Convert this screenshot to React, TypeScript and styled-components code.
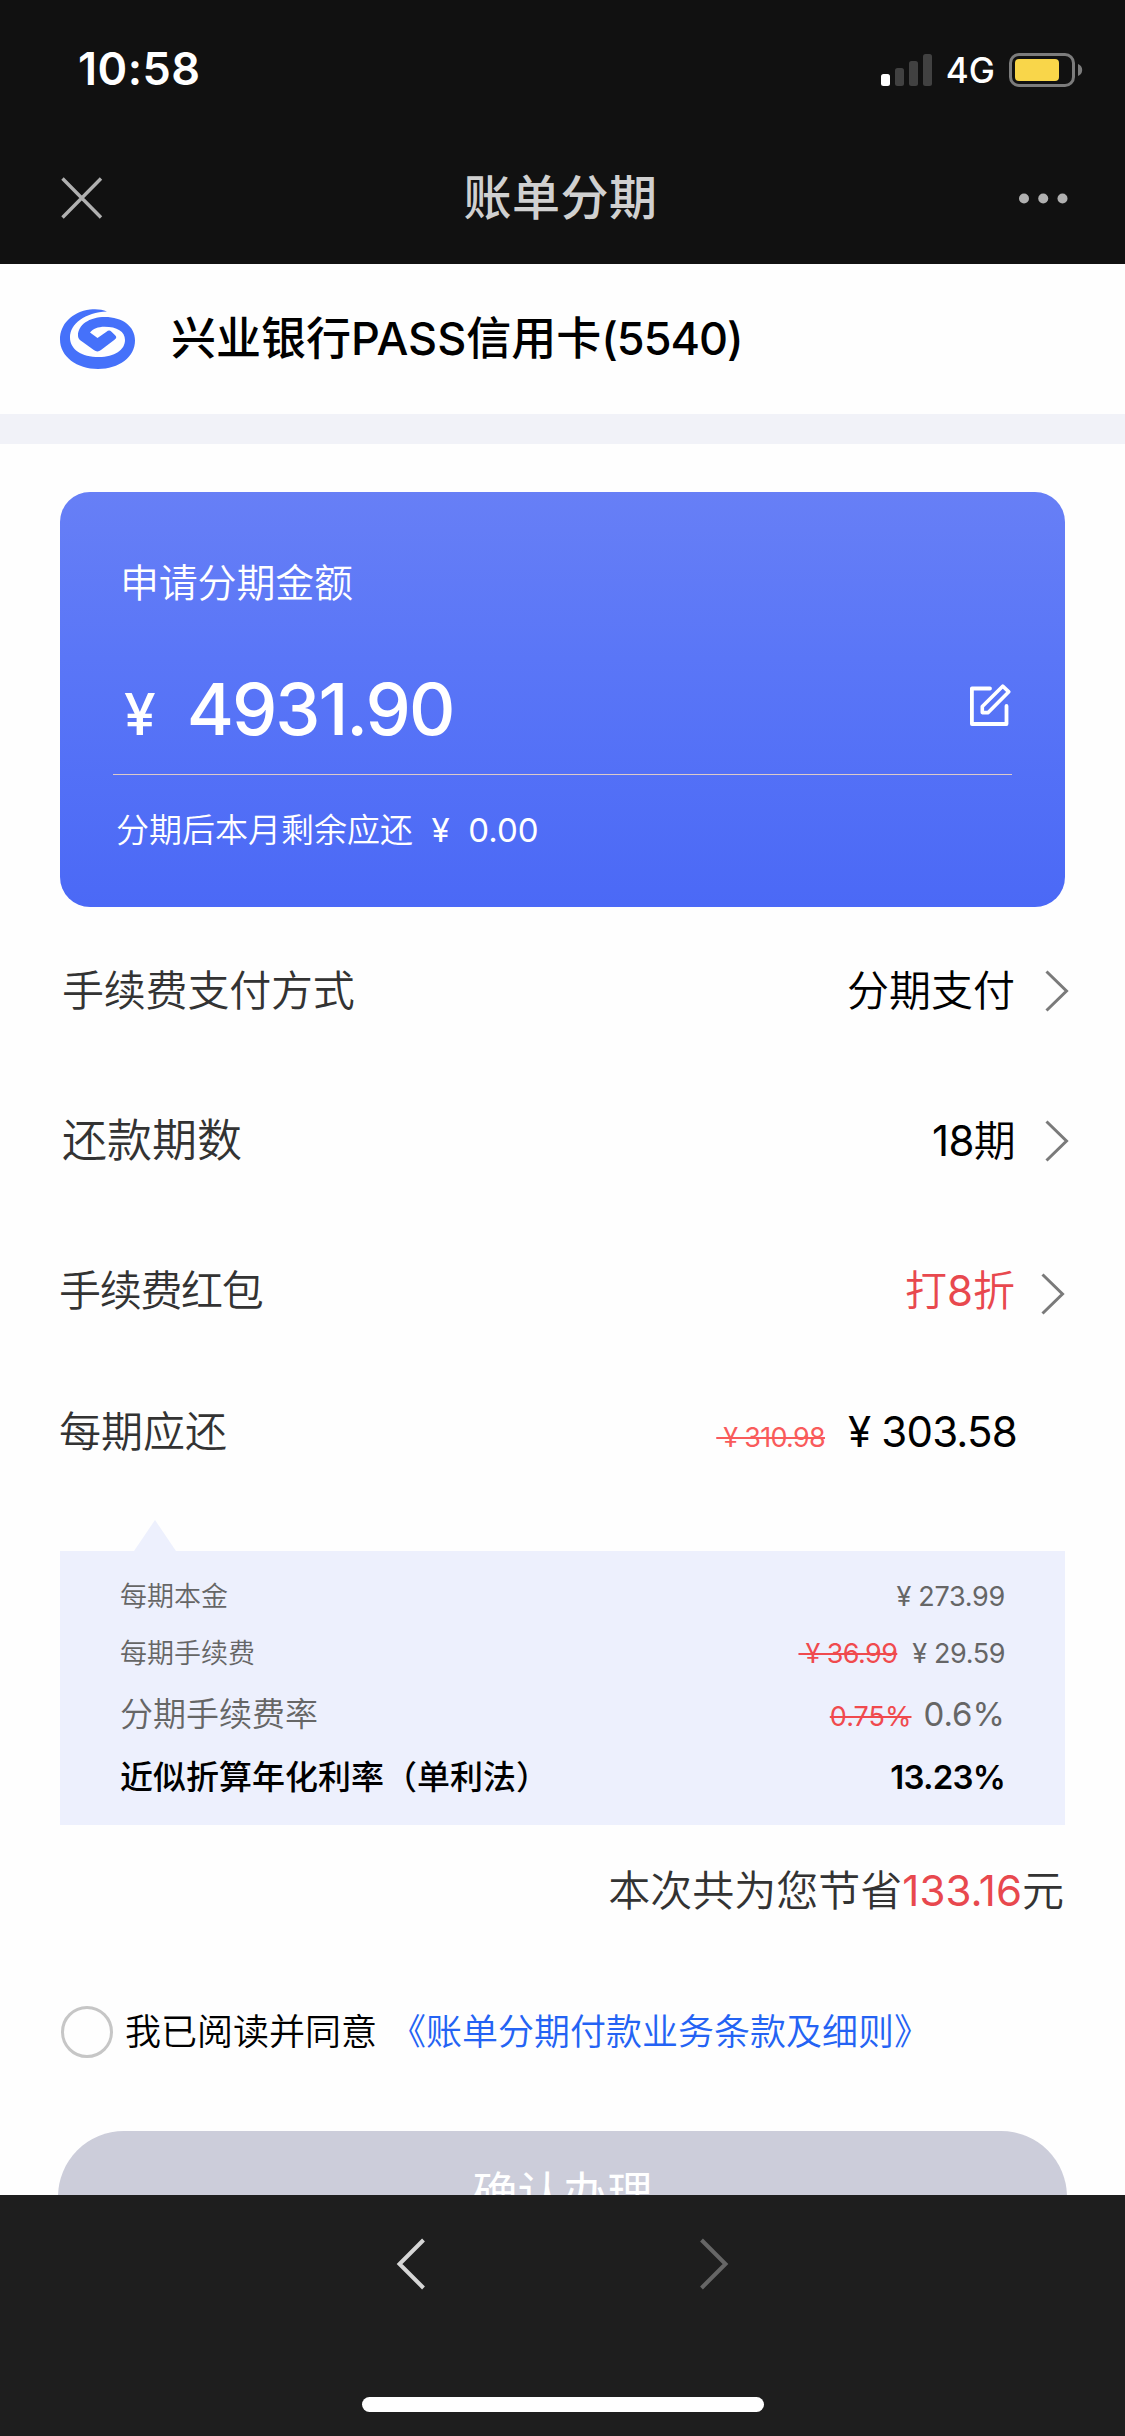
import React from "react";
import styled, { createGlobalStyle } from "styled-components";

const Global = createGlobalStyle`
  * { box-sizing: border-box; }
  html, body { margin: 0; padding: 0; }
  body {
    font-family: Inter, "Noto Sans CJK SC", sans-serif;
    background: #fefefe;
    -webkit-font-smoothing: antialiased;
  }
`;

const Screen = styled.div`
  width: 1125px;
  height: 2436px;
  display: flex;
  flex-direction: column;
  overflow: hidden;
  background: #fefefe;
`;

const Header = styled.header`
  height: 264px;
  flex: none;
  background: #111111;
`;

const StatusBar = styled.div`
  height: 138px;
  padding: 1px 42px 0 78px;
  display: flex;
  align-items: center;
  justify-content: space-between;
`;

const StatusIcons = styled.div`
  display: flex;
  align-items: center;
`;

const NavBar = styled.div`
  height: 119px;
  padding: 0 57px 0 61px;
  display: grid;
  grid-template-columns: 1fr auto 1fr;
  align-items: center;
  & > :last-child { justify-self: end; }
`;

interface TextProps {
  $size: number;
  $weight?: number;
  $color?: string;
  $track?: number;
}

const Text = styled.span<TextProps>`
  font-size: ${(p) => p.$size}px;
  font-weight: ${(p) => p.$weight ?? 350};
  color: ${(p) => p.$color ?? "#000"};
  letter-spacing: ${(p) => p.$track ?? 0}px;
  line-height: 1.3;
  white-space: pre;
`;

const Num = styled.span`
  font-weight: 400;
`;

const Title = styled(Text)`
  margin: 2px 8px 0 0;
`;

const Network = styled(Text)`
  margin: 2px 14px 0 13px;
`;

const Struck = styled(Text)`
  text-decoration: line-through;
  text-decoration-thickness: 2px;
`;

const Content = styled.main`
  flex: 1;
  min-height: 0;
  overflow: hidden;
  display: flex;
  flex-direction: column;
`;

const BankRow = styled.div`
  height: 150px;
  flex: none;
  padding: 0 60px;
  display: flex;
  align-items: center;
`;

const BankName = styled.div`
  margin-left: 36px;
`;

const Band = styled.div`
  height: 30px;
  flex: none;
  background: #f1f2f8;
`;

const Card = styled.section`
  margin: 48px 60px 0;
  height: 415px;
  flex: none;
  padding: 61px 53px 0;
  border-radius: 30px;
  background: linear-gradient(180deg, #677ff6 0%, #5a76f7 40%, #4b69f6 100%);
`;

const CardLabel = styled.div`
  height: 60px;
  padding-left: 7px;
  display: flex;
  align-items: center;
`;

const AmountRow = styled.div`
  height: 162px;
  padding: 49px 0 0 11px;
  display: flex;
  justify-content: space-between;
  border-bottom: 1px solid #dccac8;
`;

const Amount = styled.div`
  display: flex;
  align-items: baseline;
  gap: 31px;
`;

const EditSlot = styled.div`
  padding-top: 21px;
`;

const CardFoot = styled.div`
  height: 60px;
  margin-top: 25px;
  padding-left: 3px;
  display: flex;
  align-items: center;
`;

const Options = styled.div`
  padding-top: 9px;
  flex: none;
`;

const OptionRow = styled.div<{ $height?: number; $left: number; $right: number }>`
  height: ${(p) => p.$height ?? 150}px;
  padding: 0 ${(p) => p.$right}px 0 ${(p) => p.$left}px;
  display: flex;
  align-items: center;
  justify-content: space-between;
`;

const OptionValue = styled.div<{ $gap: number; $drop?: number }>`
  display: flex;
  align-items: center;
  gap: ${(p) => p.$gap}px;
  & > svg { margin-top: ${(p) => p.$drop ?? 0}px; }
`;

const PriceValue = styled.div<{ $gap: number }>`
  display: flex;
  align-items: baseline;
  gap: ${(p) => p.$gap}px;
`;

const Pointer = styled.div`
  width: 42px;
  height: 31px;
  flex: none;
  margin: 22px 0 0 134px;
  background: #edf0fd;
  clip-path: polygon(50% 0, 100% 100%, 0 100%);
`;

const Details = styled.section`
  height: 274px;
  flex: none;
  margin: 0 60px;
  padding: 17px 60px 0 60px;
  background: #edf0fd;
`;

const DetailRow = styled.div<{ $height: number }>`
  height: ${(p) => p.$height}px;
  display: flex;
  align-items: center;
  justify-content: space-between;
`;

const Savings = styled.div`
  height: 60px;
  flex: none;
  margin-top: 36px;
  padding-right: 61px;
  display: flex;
  align-items: center;
  justify-content: flex-end;
`;

const Agreement = styled.label`
  height: 67px;
  flex: none;
  margin-top: 77px;
  padding-left: 61px;
  display: flex;
  align-items: center;
`;

const Radio = styled.span`
  width: 52px;
  height: 52px;
  border: 3px solid #c6c6c6;
  border-radius: 50%;
  margin-right: 12px;
`;

const TermsText = styled(Text)`
  padding-top: 1px;
`;

const TermsLink = styled(TermsText)`
  margin-left: 13px;
`;

const Submit = styled.button`
  height: 132px;
  flex: none;
  margin: 66px 58px 0;
  padding: 0 0 6px;
  border: 0;
  border-radius: 66px;
  background: #cccdda;
  font-family: inherit;
  display: flex;
  align-items: center;
  justify-content: center;
`;

const Footer = styled.footer`
  height: 241px;
  flex: none;
  padding: 42px 0 24px;
  background: #1e1e1e;
  display: flex;
  flex-direction: column;
  align-items: center;
  justify-content: space-between;
`;

const FooterNav = styled.div`
  width: 333px;
  display: flex;
  justify-content: space-between;
`;

const HomeBar = styled.div`
  width: 402px;
  height: 15px;
  border-radius: 8px;
  background: #fff;
`;

const Signal = () => (
  <svg width="52" height="34" viewBox="0 0 52 34">
    <rect x="0" y="21" width="9" height="12" rx="2.5" fill="#fff" />
    <rect x="14" y="15" width="9" height="18" rx="2.5" fill="#414141" />
    <rect x="28" y="8" width="9" height="25" rx="2.5" fill="#414141" />
    <rect x="42" y="1" width="9" height="32" rx="2.5" fill="#414141" />
  </svg>
);

const Battery = () => (
  <svg width="74" height="34" viewBox="0 0 74 34">
    <rect x="1.5" y="1.5" width="63" height="31" rx="8.5" fill="none" stroke="#7c7c7c" strokeWidth="3" />
    <rect x="6" y="6" width="44" height="22" rx="4" fill="#f9d64a" />
    <path d="M69 11c2.600 1 4.200 3.300 4.200 6s-1.600 5-4.200 6z" fill="#7c7c7c" />
  </svg>
);

const Close = () => (
  <svg width="42" height="42" viewBox="0 0 42 42" stroke="#b0b0b0" strokeWidth="3.400" fill="none">
    <path d="M1.500 1.500 40 40.500M40 1.500 1.500 40.500" />
  </svg>
);

const Dots = () => (
  <svg width="50" height="12" viewBox="0 0 50 12" fill="#b0b0b0">
    <circle cx="6" cy="6.500" r="5" />
    <circle cx="25.200" cy="6.500" r="5" />
    <circle cx="44.500" cy="6.500" r="5" />
  </svg>
);

const BankLogo = () => (
  <svg width="75" height="60" viewBox="0 0 75 60" fill="#4571fa">
    <path d="M47 2.500C42 .3 36-.3 30 .5 12 3 0 15 0 30.500 0 47.500 17 60 38 60s37-12 37-28.500C75 17 62 8 45 8 29 8 18 16 18 26.500c0 2.200.8 3.500 2.600 5L33.800 41c2.400 1.900 4.800 1.900 7.200 0l13.500-10.300c2.200-1.700 2.200-3 .6-4.400l-3.600-3.600c-1.600-1.500-3.200-1.500-5 0L37.500 29l-7.500-5.500c3-3.600 8-5.700 14.500-5.700C57 17.800 65 22.500 65 31c0 10-10.500 17-26 17C21.500 48 10 40.500 10 28.500 10 14.500 25 3.500 47 2.500z" />
  </svg>
);

const EditIcon = () => (
  <svg width="44" height="44" viewBox="0 0 44 44" fill="none" stroke="#fff" strokeWidth="3.800" strokeLinejoin="round" strokeLinecap="round">
    <path d="M22 5.500H3.900V41H38.500V23" />
    <path d="M34.700 3.200 40.800 8.800 20.200 29.600H14.300V23.500z" strokeWidth="3.600" />
  </svg>
);

const Chevron = () => (
  <svg width="24" height="42" viewBox="0 0 24 42" fill="none" stroke="#7a7a7a" strokeWidth="3">
    <path d="M1.500 1.500 21.500 21 1.500 40.500" />
  </svg>
);

const NavArrow = ({ forward }: { forward?: boolean }) => (
  <svg width="29" height="54" viewBox="0 0 29 54" fill="none" stroke={forward ? "#666" : "#d6d6d6"} strokeWidth="4">
    <path d={forward ? "M1.500 3 25.500 27 1.500 51" : "M27.500 3 3.500 27 27.500 51"} />
  </svg>
);

export default function App() {
  return (
    <>
      <Global />
      <Screen>
        <Header>
          <StatusBar>
            <Text $size={45} $weight={600} $color="#fff" $track={0.5}>10:58</Text>
            <StatusIcons>
              <Signal />
              <Network $size={35} $weight={500} $color="#fff">4G</Network>
              <Battery />
            </StatusIcons>
          </StatusBar>
          <NavBar>
            <Close />
            <Title $size={48} $weight={500} $color="#d0d0d0" $track={0.5}>账单分期</Title>
            <Dots />
          </NavBar>
        </Header>

        <Content>
          <BankRow>
            <BankLogo />
            <BankName>
              <Text $size={45} $weight={500}>兴业银行PASS信用卡</Text>
              <Text $size={45} $weight={500} $track={-1}>(5540)</Text>
            </BankName>
          </BankRow>
          <Band />

          <Card>
            <CardLabel>
              <Text $size={39} $color="#fff" $track={-0.2}>申请分期金额</Text>
            </CardLabel>
            <AmountRow>
              <Amount>
                <Text $size={57} $weight={500} $color="#fff">¥</Text>
                <Text $size={72} $weight={500} $color="#fff" $track={-2}>4931.90</Text>
              </Amount>
              <EditSlot><EditIcon /></EditSlot>
            </AmountRow>
            <CardFoot>
              <Text $size={33} $color="#fff">分期后本月剩余应还  <Num>¥  0.00</Num></Text>
            </CardFoot>
          </Card>

          <Options>
            <OptionRow $left={62} $right={56}>
              <Text $size={42} $color="#333" $track={-0.2}>手续费支付方式</Text>
              <OptionValue $gap={30}>
                <Text $size={42}>分期支付</Text>
                <Chevron />
              </OptionValue>
            </OptionRow>
            <OptionRow $left={62} $right={56}>
              <Text $size={45} $color="#333">还款期数</Text>
              <OptionValue $gap={30}>
                <Text $size={42} $track={-0.7}><Num>18</Num>期</Text>
                <Chevron />
              </OptionValue>
            </OptionRow>
            <OptionRow $left={59} $right={60}>
              <Text $size={42} $color="#333" $track={-1.3}>手续费红包</Text>
              <OptionValue $gap={26} $drop={6}>
                <Text $size={42} $color="#e8484e">打<Num>8</Num>折</Text>
                <Chevron />
              </OptionValue>
            </OptionRow>
            <OptionRow $left={59} $right={108} $height={132}>
              <Text $size={42} $color="#333">每期应还</Text>
              <PriceValue $gap={23}>
                <Struck $size={27} $weight={400} $color="#f95b5b" $track={-0.7}> ¥ 310.98</Struck>
                <Text $size={42} $weight={400} $track={-0.8}>¥ 303.58</Text>
              </PriceValue>
            </OptionRow>
          </Options>

          <Pointer />
          <Details>
            <DetailRow $height={57}>
              <Text $size={27} $color="#666">每期本金</Text>
              <Text $size={27} $weight={400} $color="#666" $track={-0.3}>¥ 273.99</Text>
            </DetailRow>
            <DetailRow $height={57}>
              <Text $size={27} $color="#666">每期手续费</Text>
              <PriceValue $gap={15}>
                <Struck $size={27} $weight={400} $color="#f04a4e" $track={-0.6}> ¥ 36.99</Struck>
                <Text $size={27} $weight={400} $color="#666" $track={-0.4}>¥ 29.59</Text>
              </PriceValue>
            </DetailRow>
            <DetailRow $height={64}>
              <Text $size={33} $color="#666">分期手续费率</Text>
              <PriceValue $gap={12}>
                <Struck $size={27} $weight={400} $color="#f04a4e">0.75%</Struck>
                <Text $size={33} $weight={400} $color="#666">0.6%</Text>
              </PriceValue>
            </DetailRow>
            <DetailRow $height={63}>
              <Text $size={33} $weight={500}>近似折算年化利率（单利法）</Text>
              <Text $size={33} $weight={600} $track={-0.8}>13.23%</Text>
            </DetailRow>
          </Details>

          <Savings>
            <Text $size={42} $color="#333">本次共为您节省</Text>
            <Text $size={42} $weight={400} $color="#e8484e">133.16</Text>
            <Text $size={42} $color="#333">元</Text>
          </Savings>

          <Agreement>
            <Radio />
            <TermsText $size={36}>我已阅读并同意</TermsText>
            <TermsLink $size={36} $color="#2463f4">《账单分期付款业务条款及细则》</TermsLink>
          </Agreement>

          <Submit>
            <Text $size={45} $weight={400} $color="#fff">确认办理</Text>
          </Submit>
        </Content>

        <Footer>
          <FooterNav>
            <NavArrow />
            <NavArrow forward />
          </FooterNav>
          <HomeBar />
        </Footer>
      </Screen>
    </>
  );
}
